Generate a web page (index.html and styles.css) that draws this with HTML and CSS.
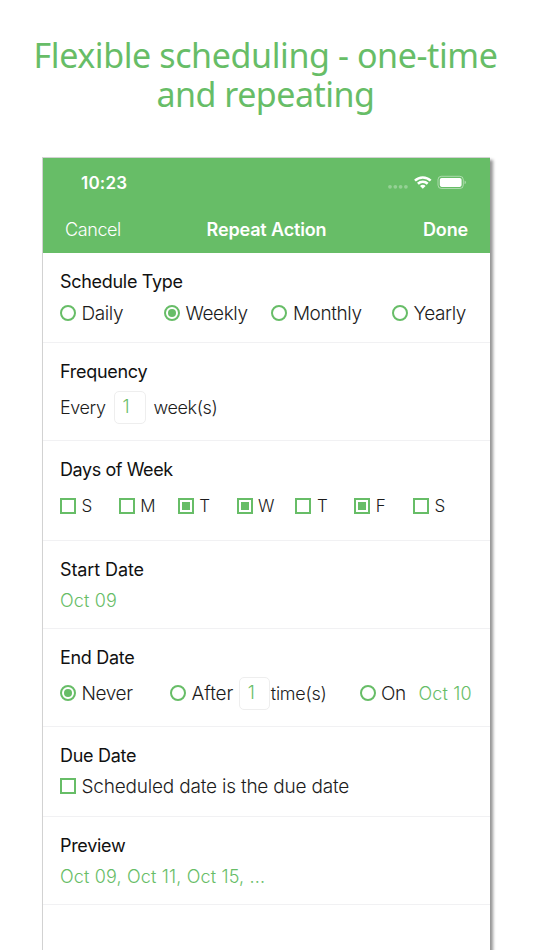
FILE: index.html
```html
<!DOCTYPE html>
<html lang="en">
<head>
<meta charset="utf-8">
<title>Repeat Action</title>
<link rel="stylesheet" href="styles.css">
</head>
<body>
<h1 class="headline"><span class="line-one">Flexible scheduling - one-time</span><br><span class="line-two">and repeating</span></h1>
<main class="phone">
  <header class="header">
    <div class="status">
      <span class="time">10:23</span>
      <svg class="status-icons" width="80" height="16" viewBox="0 0 80 16">
        <g fill="#fff" fill-opacity=".3"><circle cx="3" cy="11.8" r="1.9"/><circle cx="8.3" cy="11.8" r="1.9"/><circle cx="13.6" cy="11.8" r="1.9"/><circle cx="18.9" cy="11.8" r="1.9"/></g>
        <path d="M27.1 4.7a12.4 12.4 0 0 1 17.4 0l-1.7 1.9a9.8 9.8 0 0 0-14 0zM30 7.8a8.2 8.2 0 0 1 11.6 0l-1.8 1.9a5.7 5.7 0 0 0-8 0zM33 10.9a3.9 3.9 0 0 1 5.6 0l-2.8 2.8z" fill="#fff"/>
        <rect x="51" y="1.3" width="25.3" height="12.2" rx="3.4" fill="none" stroke="#fff" stroke-opacity=".45"/>
        <rect x="52.8" y="2.9" width="21.8" height="9" rx="1.8" fill="#fff"/>
        <path d="M77.6 5.5c1.7.7 1.7 3.1 0 3.8z" fill="#fff" fill-opacity=".5"/>
      </svg>
    </div>
    <nav class="nav"><span class="cancel">Cancel</span><span class="title">Repeat Action</span><span class="done">Done</span></nav>
  </header>

  <section class="section schedule">
    <h2>Schedule Type</h2>
    <div class="row types">
      <label class="option"><i class="radio"></i><span>Daily</span></label>
      <label class="option"><i class="radio on"></i><span>Weekly</span></label>
      <label class="option"><i class="radio"></i><span>Monthly</span></label>
      <label class="option"><i class="radio"></i><span>Yearly</span></label>
    </div>
  </section>

  <section class="section frequency">
    <h2>Frequency</h2>
    <div class="row every"><span>Every</span><span class="field">1</span><span>week(s)</span></div>
  </section>

  <section class="section days">
    <h2>Days of Week</h2>
    <div class="row week">
      <label class="option"><i class="check"></i><span>S</span></label>
      <label class="option"><i class="check"></i><span>M</span></label>
      <label class="option"><i class="check on"></i><span>T</span></label>
      <label class="option"><i class="check on"></i><span>W</span></label>
      <label class="option"><i class="check"></i><span>T</span></label>
      <label class="option"><i class="check on"></i><span>F</span></label>
      <label class="option"><i class="check"></i><span>S</span></label>
    </div>
  </section>

  <section class="section start">
    <h2>Start Date</h2>
    <div class="row"><span class="date">Oct 09</span></div>
  </section>

  <section class="section end">
    <h2>End Date</h2>
    <div class="row ends">
      <label class="option"><i class="radio on"></i><span>Never</span></label>
      <div class="after"><label class="option"><i class="radio"></i><span>After</span></label><span class="field">1</span><span class="times">time(s)</span></div>
      <div class="until"><label class="option"><i class="radio"></i><span>On</span></label><span class="date">Oct 10</span></div>
    </div>
  </section>

  <section class="section due">
    <h2>Due Date</h2>
    <div class="row"><label class="option"><i class="check"></i><span class="sentence">Scheduled date is the due date</span></label></div>
  </section>

  <section class="section preview">
    <h2>Preview</h2>
    <div class="row"><span class="date">Oct 09, Oct 11, Oct 15, ...</span></div>
  </section>
</main>
</body>
</html>
```
FILE: styles.css
```css
* { box-sizing: border-box; }
html, body { height: 100%; }
body {
  margin: 0;
  overflow: hidden;
  background: #fff;
  color: #1c1c1c;
  font-family: Inter, "Liberation Sans", sans-serif;
}
.headline {
  height: 157px;
  margin: 0;
  padding: 36px 3px 0 0;
  color: #67bd67;
  font: 400 34px/39px "Noto Sans", sans-serif;
  text-align: center;
  white-space: nowrap;
}
.line-one { letter-spacing: -0.4px; }
.line-two { letter-spacing: -0.5px; }
.phone {
  width: 448px;
  height: 820px;
  margin-left: 42px;
  border: solid #d2d2d2;
  border-width: 1px 0 0 1px;
  background: #fff;
  box-shadow: 3px 3px 3px rgba(0, 0, 0, .42);
}
.header { height: 95px; background: #67bd67; color: #fff; }
.status {
  display: flex;
  align-items: center;
  justify-content: space-between;
  height: 49px;
  padding: 0 23px 0 38px;
}
.time { font-size: 17px; font-weight: 600; letter-spacing: 0.2px; }
.nav {
  display: grid;
  grid-template-columns: 1fr auto 1fr;
  align-items: center;
  height: 44px;
  padding: 0 22px;
  font-size: 18px;
  font-weight: 600;
  letter-spacing: -0.15px;
}
.cancel { font-weight: 300; letter-spacing: -0.4px; }
.done { text-align: right; }
.section {
  padding: 17px 0 0 17px;
  border-bottom: 1px solid #f1f1f3;
}
.section h2 {
  margin: 0;
  color: #111;
  font-size: 18px;
  font-weight: 400;
  line-height: 24px;
  letter-spacing: -0.3px;
}
.days h2 { letter-spacing: -0.42px; }
.start h2 { letter-spacing: -0.1px; }
.row {
  display: flex;
  align-items: center;
  height: 34px;
  font-size: 19px;
  font-weight: 300;
  letter-spacing: -0.4px;
  white-space: nowrap;
}
.schedule, .due { height: 90px; }
.frequency, .end { height: 98px; }
.days { height: 100px; }
.start, .preview { height: 88px; }
.frequency .row, .end .row { margin-top: 6px; }
.days .row { margin-top: 7px; }
.schedule .row { margin-top: 2px; }
.due .row, .start .row, .preview .row { margin-top: 1px; }
.option { display: flex; align-items: center; gap: 6px; }
.option span { position: relative; left: -0.5px; }
.radio, .check {
  display: grid;
  flex: none;
  width: 16px;
  height: 16px;
  border: 2px solid #67bd67;
  place-items: center;
}
.radio { border-radius: 50%; }
.radio.on::after, .check.on::after {
  width: 8px;
  height: 8px;
  background: #67bd67;
  content: "";
}
.radio.on::after { border-radius: 50%; }
.types { display: grid; grid-template-columns: 104px 107.4px 120.6px 90px; }
.every { font-size: 18px; }
.every .field { margin: 0 8px; }
.field {
  width: 32px;
  height: 33px;
  padding-left: 8px;
  border: 1px solid #eee;
  border-radius: 5px;
  color: #67bd67;
  font-size: 18px;
  line-height: 30px;
}
.week { display: grid; grid-template-columns: repeat(7, 58.85px); font-size: 17px; }
.date { color: #67bd67; font-size: 18px; letter-spacing: 0.15px; }
.sentence { letter-spacing: -0.2px; }
.ends { display: grid; grid-template-columns: 110px 189.6px auto; }
.after, .until { display: flex; align-items: center; }
.after .option { letter-spacing: -0.1px; }
.after .field { width: 31px; margin-left: 5px; }
.times { margin-left: 1px; font-size: 18px; letter-spacing: -0.25px; }
.until .date { margin-left: 12px; }
```
